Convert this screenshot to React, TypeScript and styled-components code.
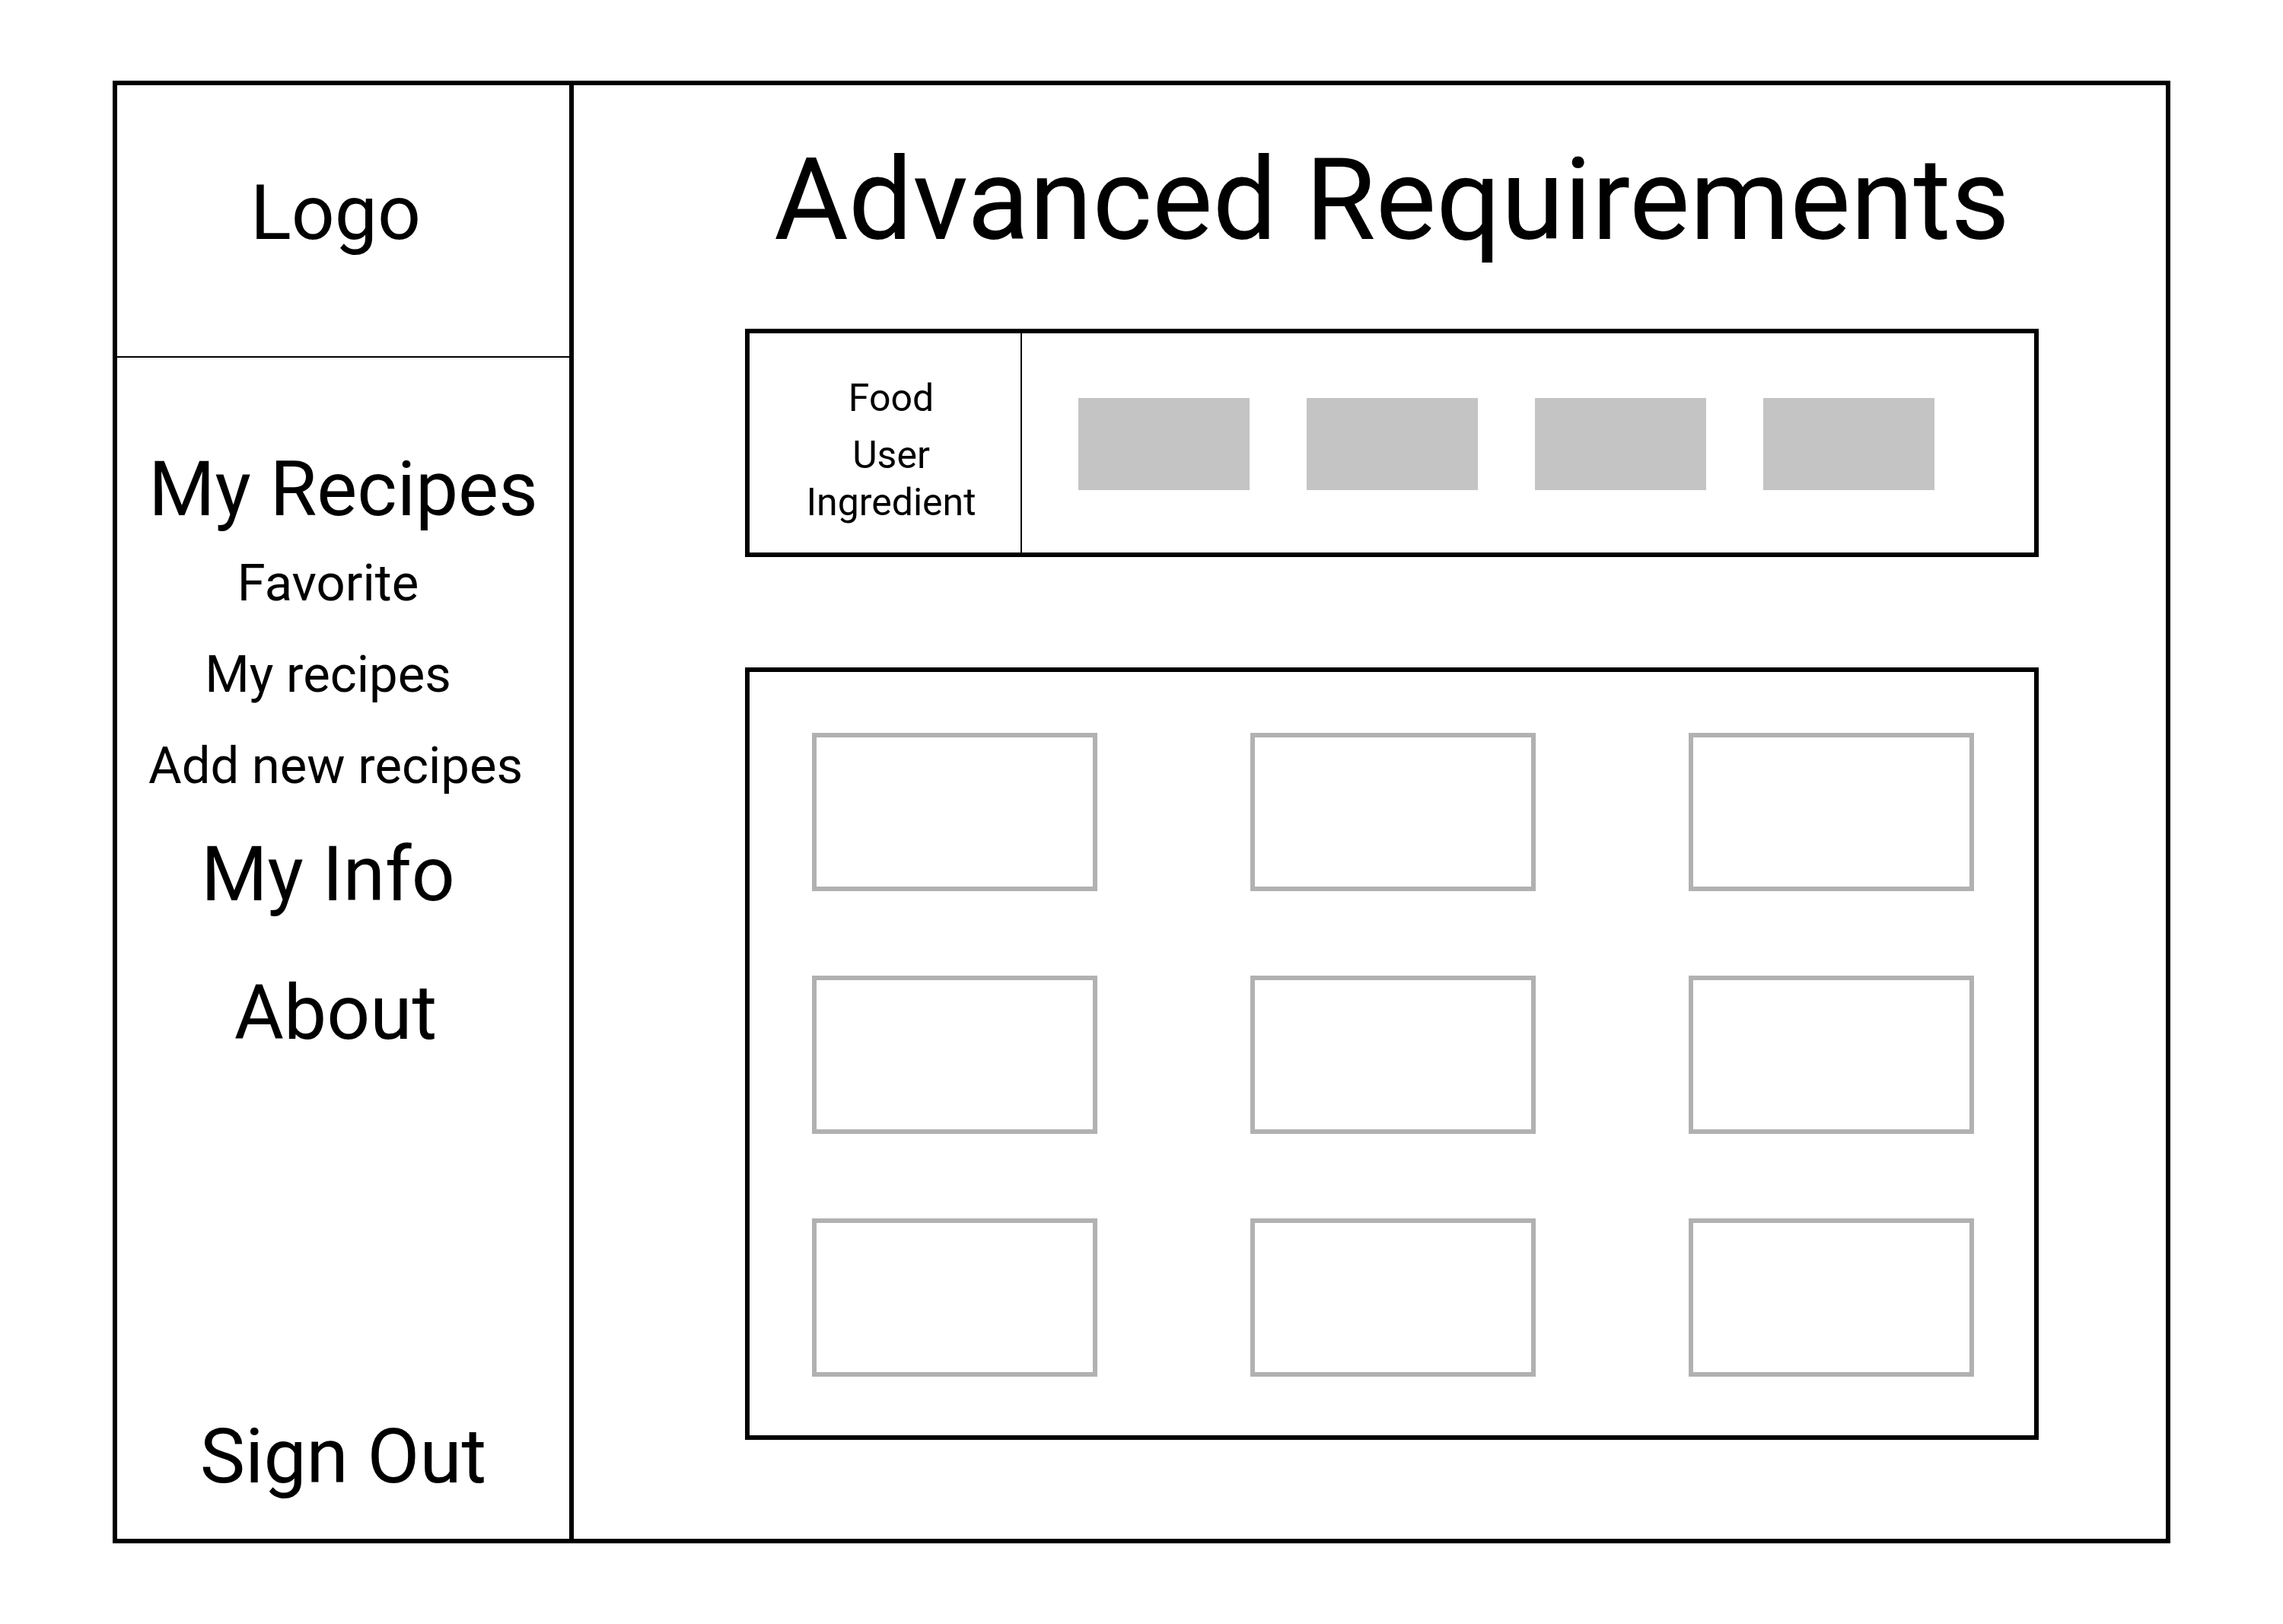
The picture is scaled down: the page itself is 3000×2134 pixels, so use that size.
import React from 'react';
import styled, { createGlobalStyle } from 'styled-components';

const ink = '#000';
const tileGrey = '#c4c4c4';
const cardGrey = '#b1b1b1';

const GlobalStyle = createGlobalStyle`
  *, *::before, *::after { box-sizing: border-box; }
  body {
    margin: 0;
    background: #fff;
    color: ${ink};
    font-family: Roboto, "Liberation Sans", sans-serif;
  }
  h1, ul { margin: 0; padding: 0; font-weight: 400; }
  ul { list-style: none; }
  a { color: inherit; text-decoration: none; }
  button {
    margin: 0;
    padding: 0;
    border: 0;
    background: none;
    color: inherit;
    font: inherit;
    cursor: pointer;
  }
`;

const Page = styled.div`
  padding: 106px 148px;
`;

const Frame = styled.div`
  display: grid;
  grid-template-columns: 600px minmax(0, 1fr);
  min-height: calc(100vh - 212px);
  border: 6px solid ${ink};
`;

const Sidebar = styled.aside`
  display: flex;
  flex-direction: column;
  border-right: 6px solid ${ink};
`;

type Shift = 'none' | 'half' | 'full';
const insets: Record<Shift, string> = { none: '0', half: '20px', full: '40px' };

const LogoBox = styled.div`
  padding: 110px 20px 130px 0;
  border-bottom: 2px solid ${ink};
  font-size: 100px;
  line-height: 116px;
  text-align: center;
`;

const Nav = styled.nav`
  padding-top: 115px;
`;

const NavList = styled.ul`
  display: flex;
  flex-direction: column;
`;

const NavItem = styled.li<{ $space: number }>`
  padding-bottom: ${({ $space }) => $space}px;
`;

const NavLink = styled.a<{ $shift: Shift }>`
  display: block;
  padding-right: ${({ $shift }) => insets[$shift]};
  font-size: 100px;
  line-height: 116px;
  text-align: center;
  white-space: nowrap;
`;

const SubList = styled.ul`
  display: flex;
  flex-direction: column;
  gap: 42px;
  padding-top: 26px;
`;

const SubLink = styled(NavLink)`
  font-size: 67px;
  line-height: 78px;
`;

const SignOut = styled.button`
  && {
    margin-top: auto;
    padding-bottom: 50px;
    font-size: 100px;
    line-height: 116px;
  }
`;

const Main = styled.main`
  padding: 63px 167px 130px 225px;
`;

const Title = styled.h1`
  font-size: 150px;
  line-height: 176px;
  text-align: center;
  white-space: nowrap;
`;

const Panel = styled.section`
  border: 6px solid ${ink};
`;

const FilterPanel = styled(Panel)`
  display: grid;
  grid-template-columns: 358px minmax(0, 1fr);
  margin-top: 81px;
`;

const FilterKinds = styled.div`
  display: flex;
  flex-direction: column;
  align-items: center;
  gap: 13px;
  padding: 54px 0 34px 16px;
  border-right: 2px solid ${ink};
`;

const KindPair = styled.div`
  display: flex;
  flex-direction: column;
  align-items: center;
`;

const Kind = styled.button`
  && {
    font-size: 50px;
    line-height: 62px;
  }
`;

const Tiles = styled.ul`
  && {
    display: flex;
    gap: 75px;
    padding: 85px 72px 82px 74px;
  }
`;

const Tile = styled.li`
  flex: 0 1 225px;
  height: 121px;
  background: ${tileGrey};
`;

const ResultPanel = styled(Panel)`
  margin-top: 145px;
  padding: 80px 79px 77px 82px;
`;

const Cards = styled.ul`
  display: grid;
  grid-template-columns: repeat(3, minmax(0, 375px));
  justify-content: space-between;
  row-gap: 111px;
`;

const Card = styled.li`
  height: 208px;
  border: 6px solid ${cardGrey};
`;

const recipeLinks: { label: string; shift: Shift }[] = [
  { label: 'Favorite', shift: 'full' },
  { label: 'My recipes', shift: 'full' },
  { label: 'Add new recipes', shift: 'half' },
];

const tiles = [1, 2, 3, 4];
const cards = [1, 2, 3, 4, 5, 6, 7, 8, 9];

export default function App() {
  return (
    <>
      <GlobalStyle />
      <Page>
        <Frame>
          <Sidebar>
            <LogoBox>Logo</LogoBox>
            <Nav>
              <NavList>
                <NavItem $space={46}>
                  <NavLink href="#recipes" $shift="none">My Recipes</NavLink>
                  <SubList>
                    {recipeLinks.map(({ label, shift }) => (
                      <li key={label}>
                        <SubLink href="#recipes" $shift={shift}>{label}</SubLink>
                      </li>
                    ))}
                  </SubList>
                </NavItem>
                <NavItem $space={66}>
                  <NavLink href="#info" $shift="full">My Info</NavLink>
                </NavItem>
                <NavItem $space={66}>
                  <NavLink href="#about" $shift="half">About</NavLink>
                </NavItem>
              </NavList>
            </Nav>
            <SignOut type="button">Sign Out</SignOut>
          </Sidebar>
          <Main>
            <Title>Advanced Requirements</Title>
            <FilterPanel>
              <FilterKinds>
                <Kind type="button">Food</Kind>
                <KindPair>
                  <Kind type="button">User</Kind>
                  <Kind type="button">Ingredient</Kind>
                </KindPair>
              </FilterKinds>
              <Tiles>
                {tiles.map((n) => <Tile key={n} />)}
              </Tiles>
            </FilterPanel>
            <ResultPanel>
              <Cards>
                {cards.map((n) => <Card key={n} />)}
              </Cards>
            </ResultPanel>
          </Main>
        </Frame>
      </Page>
    </>
  );
}
